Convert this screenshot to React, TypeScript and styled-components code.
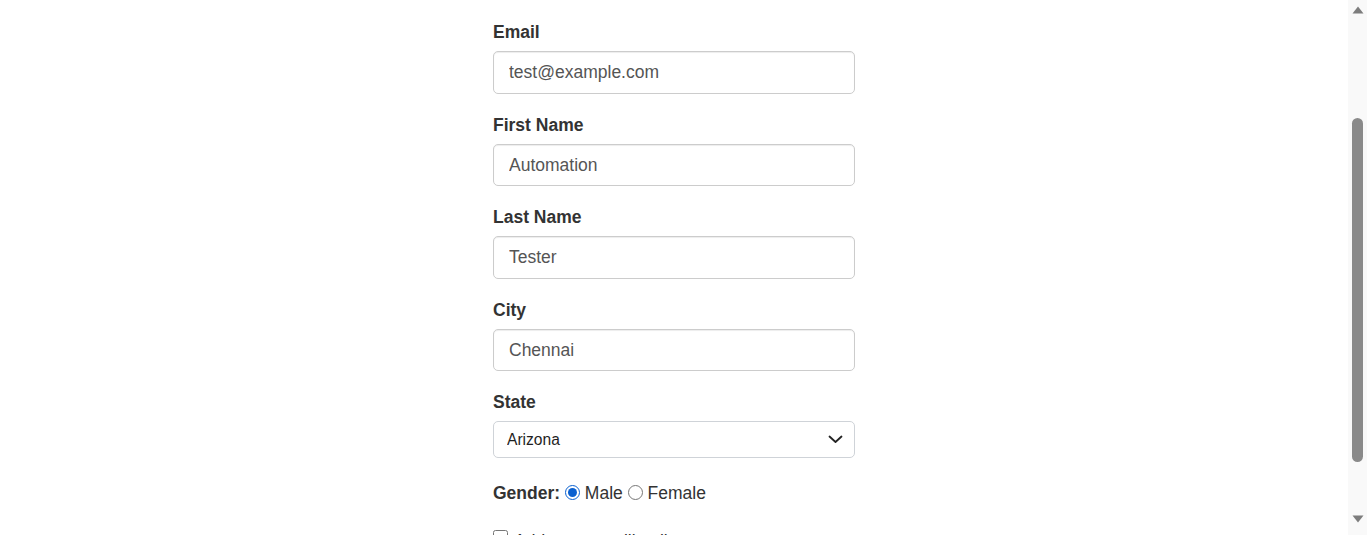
import React, { useLayoutEffect, useEffect } from "react";
import styled, { createGlobalStyle } from "styled-components";

const GlobalStyle = createGlobalStyle`
  html {
    scrollbar-width: none;
  }
  html::-webkit-scrollbar {
    display: none;
  }
  body {
    margin: 0;
    background: #ffffff;
    color: #333333;
    font-family: "Liberation Sans", Arial, Helvetica, sans-serif;
  }
`;

const Page = styled.div`
  box-sizing: border-box;
  height: 779px;
  padding: 177px 19px 0 0;
`;

const Form = styled.form`
  width: 362px;
  margin: 0 auto;
`;

const Group = styled.div<{ $gap?: number }>`
  margin-bottom: ${(p) => p.$gap ?? 18.75}px;
`;

const Label = styled.label<{ $inline?: boolean }>`
  display: ${(p) => (p.$inline ? "inline" : "block")};
  margin-bottom: ${(p) => (p.$inline ? 0 : 6.25)}px;
  font-size: 17.5px;
  line-height: 25px;
  font-weight: 700;
  color: #333333;
`;

const TextInput = styled.input`
  display: block;
  box-sizing: border-box;
  width: 100%;
  height: 42.5px;
  margin: 0;
  padding: 0 15px;
  border: 1px solid #cccccc;
  border-radius: 5px;
  background: #ffffff;
  color: #555555;
  font-family: "Liberation Sans", Arial, Helvetica, sans-serif;
  font-size: 17.5px;
  box-shadow: inset 0 1px 1px rgba(0, 0, 0, 0.075);
  outline: none;
`;

const SelectWrap = styled.div`
  position: relative;
  width: 100%;
`;

const Select = styled.select`
  display: block;
  box-sizing: border-box;
  width: 100%;
  height: 37px;
  margin: 0;
  padding: 0 40px 0 13px;
  border: 1px solid #cfd3d8;
  border-radius: 5px;
  background: #ffffff;
  color: #1f1f1f;
  font-family: "Liberation Sans", Arial, Helvetica, sans-serif;
  font-size: 15.6px;
  appearance: none;
  -webkit-appearance: none;
  outline: none;
`;

const Chevron = styled.svg`
  position: absolute;
  right: 12px;
  top: 14px;
  width: 15px;
  height: 9px;
  pointer-events: none;
`;

const InlineRow = styled.div`
  font-size: 17.5px;
  line-height: 25px;
  color: #333333;
`;

const Option = styled.label`
  font-size: 17.5px;
  color: #333333;
`;

const Radio = styled.input`
  width: 15px;
  height: 15px;
  margin: 0;
  vertical-align: -1px;
  accent-color: #0a60d0;
`;

const CheckRow = styled.div`
  font-size: 17.5px;
  line-height: 25px;
  color: #333333;
`;

const Checkbox = styled.input`
  width: 15px;
  height: 15px;
  margin: 0 6px 0 0;
  vertical-align: 2px;
`;

const Scrollbar = styled.div`
  position: fixed;
  top: 0;
  right: 0;
  bottom: 0;
  width: 19px;
  display: flex;
  flex-direction: column;
  background: #f9f9f9;
`;

const ArrowButton = styled.div<{ $end?: boolean }>`
  height: ${(p) => (p.$end ? 21 : 17)}px;
  box-sizing: border-box;
  display: flex;
  justify-content: center;
  align-items: ${(p) => (p.$end ? "flex-start" : "flex-end")};
  padding: ${(p) => (p.$end ? "1px 0 0" : "0 0 3px")};
`;

const Track = styled.div`
  flex: 1;
  display: flex;
  flex-direction: column;
`;

const Thumb = styled.div`
  margin: 101px 4px 0 4px;
  height: 344px;
  border-radius: 6px;
  background: #8a8a8a;
`;

const fields = [
  { label: "Email", value: "test@example.com", type: "email" },
  { label: "First Name", value: "Automation", type: "text" },
  { label: "Last Name", value: "Tester", type: "text" },
  { label: "City", value: "Chennai", type: "text" },
];

export default function App() {
  useLayoutEffect(() => {
    window.scrollTo(0, 157);
  }, []);
  useEffect(() => {
    const id = window.setTimeout(() => window.scrollTo(0, 157), 0);
    return () => window.clearTimeout(id);
  }, []);

  return (
    <>
      <GlobalStyle />
      <Page>
        <Form onSubmit={(e) => e.preventDefault()}>
          {fields.map((f) => (
            <Group key={f.label}>
              <Label>{f.label}</Label>
              <TextInput type={f.type} defaultValue={f.value} />
            </Group>
          ))}
          <Group $gap={23}>
            <Label>State</Label>
            <SelectWrap>
              <Select defaultValue="Arizona">
                <option>Alabama</option>
                <option>Alaska</option>
                <option>Arizona</option>
                <option>Arkansas</option>
                <option>California</option>
              </Select>
              <Chevron viewBox="0 0 15 9">
                <path
                  d="M1.5 1.5 L7.5 7 L13.5 1.5"
                  fill="none"
                  stroke="#222"
                  strokeWidth="1.8"
                  strokeLinecap="round"
                  strokeLinejoin="round"
                />
              </Chevron>
            </SelectWrap>
          </Group>
          <Group $gap={23}>
            <InlineRow>
              <Label $inline>Gender:</Label>{" "}
              <Option>
                <Radio type="radio" name="gender" defaultChecked /> Male
              </Option>{" "}
              <Option>
                <Radio type="radio" name="gender" /> Female
              </Option>
            </InlineRow>
          </Group>
          <CheckRow>
            <label>
              <Checkbox type="checkbox" />
              Add to our mailing list
            </label>
          </CheckRow>
        </Form>
      </Page>
      <Scrollbar aria-hidden="true">
        <ArrowButton>
          <svg width="12" height="8" viewBox="0 0 12 8">
            <path d="M6 0.5 L11.5 7.5 L0.5 7.5 Z" fill="#7d7d7d" />
          </svg>
        </ArrowButton>
        <Track>
          <Thumb />
        </Track>
        <ArrowButton $end>
          <svg width="12" height="8" viewBox="0 0 12 8">
            <path d="M0.5 0.5 L11.5 0.5 L6 7.5 Z" fill="#7d7d7d" />
          </svg>
        </ArrowButton>
      </Scrollbar>
    </>
  );
}
